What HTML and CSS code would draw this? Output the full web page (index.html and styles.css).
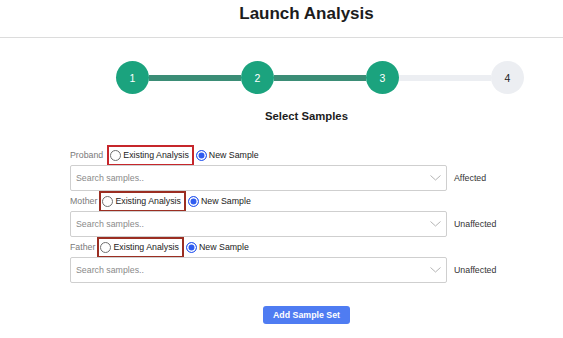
FILE: index.html
```html
<!doctype html>
<html lang="en-US">
  <head>
    <meta charset="utf-8" />
    <title>Launch Analysis</title>
    <link rel="stylesheet" href="styles.css">
  </head>
  <body>
    <div class="header">Launch Analysis</div>

    <div class="stepper">
      <span class="step done">1</span>
      <span class="bar done"></span>
      <span class="step done">2</span>
      <span class="bar done"></span>
      <span class="step done">3</span>
      <span class="bar"></span>
      <span class="step">4</span>
    </div>

    <div class="section-title">Select Samples</div>

    <div class="samples">
      <div class="sample">
        <div class="choice">
          <span class="who">Proband</span>
          <label class="opt boxed red"><input type="radio" name="r1">Existing Analysis</label>
          <label class="opt"><input type="radio" name="r1" checked>New Sample</label>
        </div>
        <div class="pick">
          <div class="select">
            <span class="placeholder">Search samples..</span>
            <svg class="chev" width="11" height="6" viewBox="0 0 11 6"><path d="M0.5 0.5 L5.5 5 L10.5 0.5" fill="none" stroke="#b5b5b5" stroke-width="1"/></svg>
          </div>
          <span class="status">Affected</span>
        </div>
      </div>

      <div class="sample">
        <div class="choice">
          <span class="who">Mother</span>
          <label class="opt boxed dark"><input type="radio" name="r2">Existing Analysis</label>
          <label class="opt"><input type="radio" name="r2" checked>New Sample</label>
        </div>
        <div class="pick">
          <div class="select">
            <span class="placeholder">Search samples..</span>
            <svg class="chev" width="11" height="6" viewBox="0 0 11 6"><path d="M0.5 0.5 L5.5 5 L10.5 0.5" fill="none" stroke="#b5b5b5" stroke-width="1"/></svg>
          </div>
          <span class="status">Unaffected</span>
        </div>
      </div>

      <div class="sample">
        <div class="choice">
          <span class="who">Father</span>
          <label class="opt boxed dark"><input type="radio" name="r3">Existing Analysis</label>
          <label class="opt"><input type="radio" name="r3" checked>New Sample</label>
        </div>
        <div class="pick">
          <div class="select">
            <span class="placeholder">Search samples..</span>
            <svg class="chev" width="11" height="6" viewBox="0 0 11 6"><path d="M0.5 0.5 L5.5 5 L10.5 0.5" fill="none" stroke="#b5b5b5" stroke-width="1"/></svg>
          </div>
          <span class="status">Unaffected</span>
        </div>
      </div>
    </div>

    <div class="actions">
      <button class="add-btn">Add Sample Set</button>
    </div>
  </body>
</html>
```

FILE: styles.css
```css
body {
  margin: 0;
  background: #fff;
  color: #222;
  font-family: "Liberation Sans", Arial, sans-serif;
}
.header {
  height: 37px;
  line-height: 28px;
  padding-left: 50px;
  text-align: center;
  font-size: 17px;
  font-weight: bold;
  color: #1c1c1c;
  border-bottom: 1px solid #dcdcdc;
}

/* stepper */
.stepper {
  display: flex;
  align-items: center;
  width: 408px;
  margin: 23px 0 0 116px;
}
.step {
  width: 33px;
  height: 33px;
  border-radius: 50%;
  background: #eceef2;
  color: #222;
  font-size: 10.5px;
  display: flex;
  align-items: center;
  justify-content: center;
  flex: none;
}
.step.done {
  background: #1ba37e;
  color: #fff;
}
.bar {
  flex: 1;
  height: 6px;
  background: #eceef2;
}
.bar.done {
  background: #3b8d76;
}

.section-title {
  margin-top: 15px;
  padding-left: 50px;
  text-align: center;
  font-size: 11.3px;
  line-height: 14px;
  font-weight: bold;
  color: #1c1c1c;
}

/* sample rows */
.samples {
  margin: 22px 0 0 70px;
}
.choice {
  display: flex;
  align-items: center;
  height: 20px;
  font-size: 8.8px;
}
.who {
  color: #7a7a7a;
  margin-right: 2px;
}
.sample:first-child .who {
  margin-right: 4px;
}
.opt {
  display: flex;
  align-items: center;
  height: 21px;
  color: #222;
  padding: 0 2px;
}
.opt.boxed {
  border: 2px solid #c6262b;
  padding: 0 3px 0 1px;
  box-sizing: border-box;
}
.opt.dark {
  border-color: #9b2e22;
}
.opt input {
  appearance: none;
  -webkit-appearance: none;
  width: 11px;
  height: 11px;
  margin: 0 2px 0 0;
  border: 1px solid #707070;
  border-radius: 50%;
  background: #fff;
  box-sizing: border-box;
}
.opt input:checked {
  border-color: #2f5cf0;
  background: #2f5cf0;
  box-shadow: inset 0 0 0 1.5px #fff;
}
.pick {
  display: flex;
  align-items: center;
}
.select {
  width: 377px;
  height: 26px;
  box-sizing: border-box;
  border: 1px solid #cfcfcf;
  border-radius: 2px;
  display: flex;
  align-items: center;
  justify-content: space-between;
  padding: 0 5px 0 5px;
}
.placeholder {
  font-size: 8.8px;
  color: #8a8a8a;
}
.chev {
  display: block;
}
.status {
  margin-left: 7px;
  font-size: 8.8px;
  color: #333;
}

.actions {
  margin-top: 21px;
  padding-left: 50px;
  text-align: center;
}
.add-btn {
  width: 87px;
  height: 18px;
  padding: 0;
  border: none;
  border-radius: 3px;
  background: #4f7cf2;
  color: #fff;
  font-family: "Liberation Sans", Arial, sans-serif;
  font-size: 8.8px;
  font-weight: bold;
}
```
